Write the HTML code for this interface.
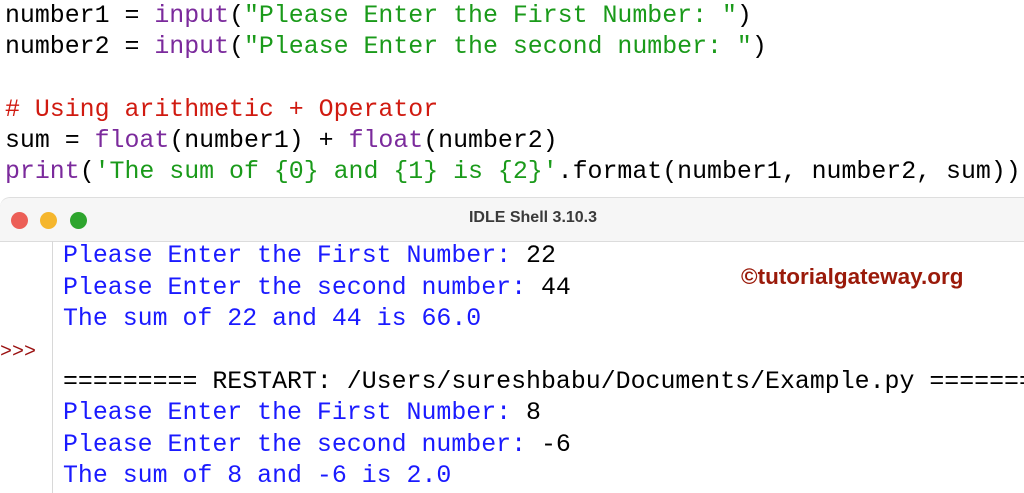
<!DOCTYPE html>
<html><head><style>
body{margin:0;width:1024px;height:493px;overflow:hidden;background:#fff;position:relative;font-family:"Liberation Mono",monospace;}
.l{position:absolute;font-size:24.9px;white-space:pre;line-height:31px;}
.p{color:#7b2a9c}.g{color:#1a9a1a}.r{color:#d01a10}.k{color:#000}.b{color:#1a1aff}
#bar{position:absolute;left:0;top:197px;width:1024px;height:43px;background:#f6f6f6;border-top:1px solid #dedede;border-bottom:1px solid #dcdcdc;border-radius:10px 0 0 0;}
.d{position:absolute;top:14px;width:17px;height:17px;border-radius:50%}
#t{position:absolute;left:0;width:1066px;text-align:center;top:11px;font:bold 16px "Liberation Sans",sans-serif;color:#3a3a3a}
#gut{position:absolute;left:52px;top:241px;width:1px;height:252px;background:#d8d8d8}
#wm{position:absolute;left:741px;top:264px;font:bold 22.5px "Liberation Sans",sans-serif;color:#9a1a0a}
</style></head><body>
<div class="l" style="left:5px;top:1px"><span class="k">number1 = </span><span class="p">input</span><span class="k">(</span><span class="g">"Please Enter the First Number: "</span><span class="k">)</span></div>
<div class="l" style="left:5px;top:32px"><span class="k">number2 = </span><span class="p">input</span><span class="k">(</span><span class="g">"Please Enter the second number: "</span><span class="k">)</span></div>
<div class="l r" style="left:5px;top:95px"># Using arithmetic + Operator</div>
<div class="l" style="left:5px;top:126px"><span class="k">sum = </span><span class="p">float</span><span class="k">(number1) + </span><span class="p">float</span><span class="k">(number2)</span></div>
<div class="l" style="left:5px;top:157px"><span class="p">print</span><span class="k">(</span><span class="g">'The sum of {0} and {1} is {2}'</span><span class="k">.format(number1, number2, sum))</span></div>
<div id="bar"><div class="d" style="left:11px;background:#ec5f57"></div><div class="d" style="left:40px;background:#f5b62d"></div><div class="d" style="left:70px;background:#2ea52e"></div><div id="t">IDLE Shell 3.10.3</div></div>
<div id="gut"></div>
<div class="l b" style="left:63px;top:241px">Please Enter the First Number: <span class="k">22</span></div>
<div class="l b" style="left:63px;top:273px">Please Enter the second number: <span class="k">44</span></div>
<div class="l b" style="left:63px;top:304px">The sum of 22 and 44 is 66.0</div>
<div class="l" style="left:0px;top:337px;color:#9a1010;font-size:20px">&gt;&gt;&gt;</div>
<div class="l k" style="left:63px;top:367px">========= RESTART: /Users/sureshbabu/Documents/Example.py =========</div>
<div class="l b" style="left:63px;top:398px">Please Enter the First Number: <span class="k">8</span></div>
<div class="l b" style="left:63px;top:430px">Please Enter the second number: <span class="k">-6</span></div>
<div class="l b" style="left:63px;top:461px">The sum of 8 and -6 is 2.0</div>
<div id="wm">©tutorialgateway.org</div>
</body></html>
